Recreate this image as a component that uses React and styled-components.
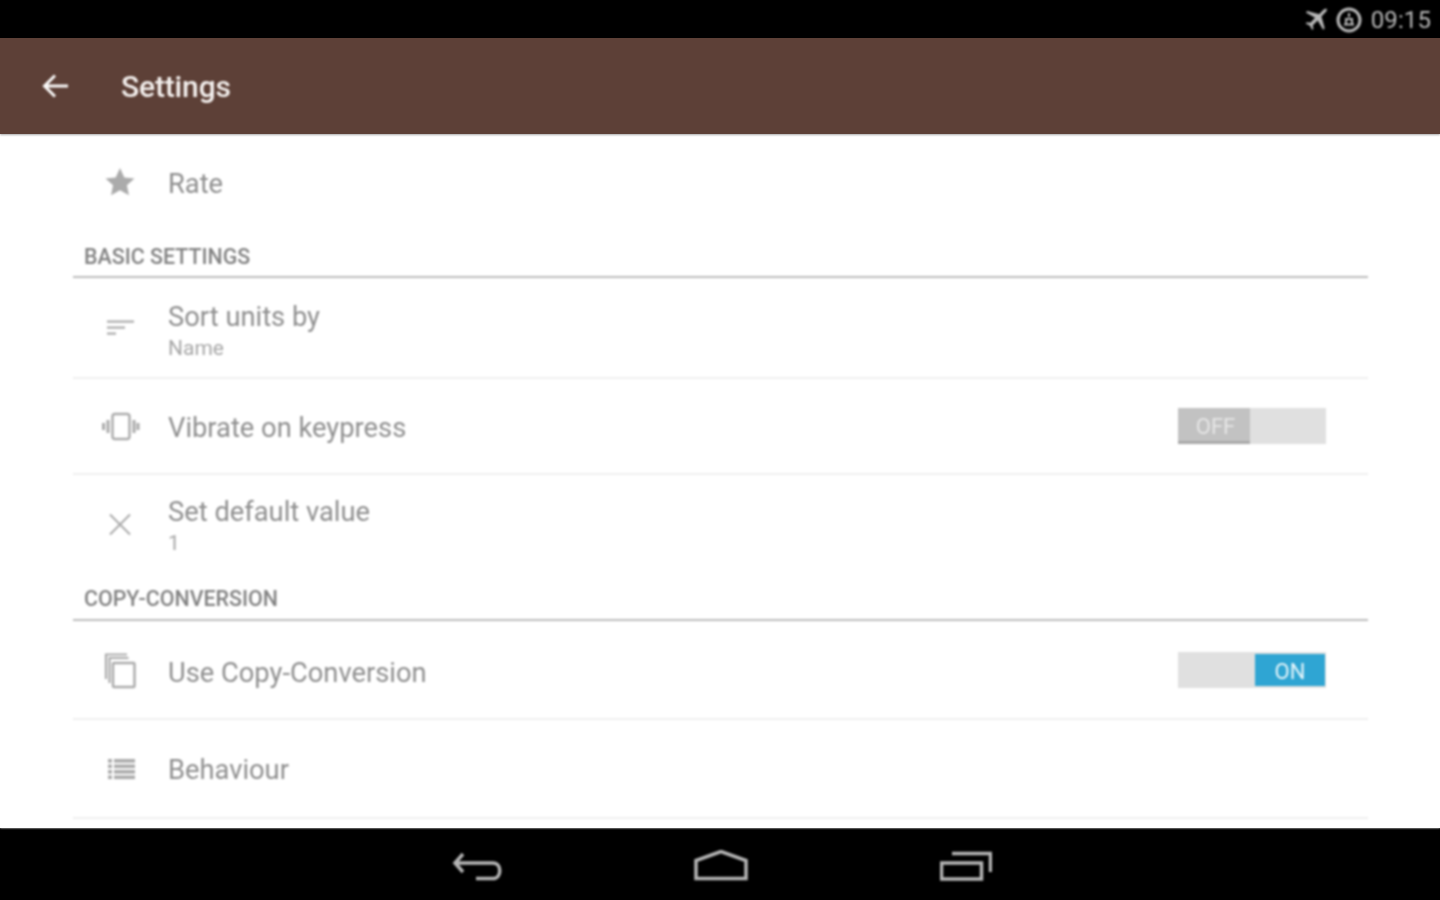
import React from "react";
import styled, { createGlobalStyle, css } from "styled-components";

const GlobalStyle = createGlobalStyle`
  html, body {
    margin: 0;
    padding: 0;
    background: #fff;
  }
  body {
    font-family: Roboto, "Liberation Sans", sans-serif;
  }
`;

// the reference is an upscaled capture, everything drawn on the bars is a bit soft
const soft = css`
  filter: blur(0.8px);
`;

const Screen = styled.div`
  width: 1440px;
  height: 900px;
  display: flex;
  flex-direction: column;
  overflow: hidden;
  background: #fff;
`;

const StatusBar = styled.div`
  height: 38px;
  flex: none;
  background: #000;
  display: flex;
  align-items: center;
  justify-content: flex-end;
  padding: 1px 9px 0 0;
  box-sizing: border-box;
  color: #b8b8b8;
`;

const StatusTime = styled.span`
  ${soft}
  font-size: 24px;
  margin-left: 8px;
  letter-spacing: 0.1px;
`;

const AirplaneIcon = styled.svg`
  ${soft}
  width: 26px;
  height: 26px;
  margin-right: 6px;
`;

const AlarmIcon = styled.svg`
  ${soft}
  width: 28px;
  height: 28px;
`;

const Toolbar = styled.div`
  height: 96px;
  flex: none;
  background: #5d4037;
  display: flex;
  align-items: center;
  box-shadow: 0 1px 2px rgba(0, 0, 0, 0.35);
  position: relative;
  z-index: 1;
`;

const BackButton = styled.div`
  ${soft}
  width: 121px;
  height: 30px;
  padding-left: 41px;
  box-sizing: border-box;
  display: flex;
  align-items: center;
  color: #fbfaf9;
`;

const Title = styled.div`
  ${soft}
  color: #f5f1ef;
  font-size: 30px;
  font-weight: 500;
  letter-spacing: -0.15px;
`;

const Content = styled.div`
  ${soft}
  flex: 1;
  padding: 0 72px 0 73px;
  background: #fff;
  overflow: hidden;
`;

const Row = styled.div`
  height: ${(p) => p.$h}px;
  display: flex;
  align-items: center;
  box-sizing: border-box;
  border-bottom: ${(p) => (p.$line ? "2px solid #efefef" : "none")};
`;

const IconBox = styled.div`
  width: 95px;
  flex: none;
  box-sizing: border-box;
  padding-right: 1px;
  display: flex;
  justify-content: center;
  color: #ababab;
`;

const RowText = styled.div`
  flex: 1;
  display: flex;
  flex-direction: column;
  padding-top: ${(p) => p.$pt || 0}px;
`;

const RowTitle = styled.div`
  font-size: 27.3px;
  line-height: 36px;
  color: #8f8f8f;
`;

const RowSub = styled.div`
  font-size: 21px;
  line-height: 26px;
  color: #a6a6a6;
`;

const SectionHeader = styled.div`
  height: ${(p) => p.$h}px;
  box-sizing: border-box;
  border-bottom: 2px solid #bdbdbd;
  display: flex;
  align-items: flex-end;
  padding: 0 0 ${(p) => p.$pb}px 11px;
  font-size: 21.4px;
  font-weight: 500;
  line-height: 26px;
  color: #828282;
`;

const Toggle = styled.div`
  width: 148px;
  height: 36px;
  margin-right: 42px;
  background: #e0e0e0;
  display: flex;
  justify-content: ${(p) => (p.$on ? "flex-end" : "flex-start")};
  align-items: stretch;
`;

const Thumb = styled.div`
  width: ${(p) => (p.$on ? 70 : 72)}px;
  margin: ${(p) => (p.$on ? "2px 1px" : "0")};
  padding-top: ${(p) => (p.$on ? 3 : 4)}px;
  padding-left: ${(p) => (p.$on ? 0 : 3)}px;
  box-sizing: border-box;
  background: ${(p) => (p.$on ? "#2fa5d3" : "#c2c2c2")};
  border-bottom: ${(p) => (p.$on ? "none" : "3px solid #a9a9a9")};
  color: ${(p) => (p.$on ? "#e8f6fb" : "#e6e6e6")};
  font-size: 22px;
  display: flex;
  align-items: center;
  justify-content: center;
`;

const NavBar = styled.div`
  height: 72px;
  flex: none;
  background: #000;
  display: flex;
  justify-content: center;
  align-items: center;
  gap: 190px;
  padding: 4px 0 0 4px;
  box-sizing: border-box;
  color: #b5b5b5;
`;

const NavIcon = styled.svg`
  ${soft}
  width: ${(p) => p.$w}px;
  height: 32px;
`;

const GlyphIcon = styled.svg`
  width: 40px;
  height: 40px;
  display: block;
`;

const star = (
  <GlyphIcon viewBox="0 0 40 40" fill="currentColor">
    <path d="M20 5l4.300 9.400 10.200 1.100-7.600 6.800 2.100 10-9-5.100-9 5.100 2.100-10-7.600-6.800 10.200-1.100z" />
  </GlyphIcon>
);

const sort = (
  <GlyphIcon viewBox="0 0 40 40" fill="currentColor">
    <rect x="7" y="12.500" width="27" height="2.200" />
    <rect x="7" y="18.500" width="18" height="2.200" />
    <rect x="7" y="24.500" width="9" height="2.200" />
  </GlyphIcon>
);

const vibrate = (
  <GlyphIcon viewBox="0 0 40 40" fill="none" stroke="currentColor">
    <rect x="12.500" y="8" width="17" height="25" rx="2.500" strokeWidth="2.400" />
    <path d="M8 14v13M3.500 17v7M34 14v13M38 17v7" strokeWidth="3" />
  </GlyphIcon>
);

const cross = (
  <GlyphIcon viewBox="0 0 40 40" fill="none" stroke="currentColor">
    <path d="M10 10.500l20 20M30 10.500l-20 20" strokeWidth="2" />
  </GlyphIcon>
);

const copy = (
  <GlyphIcon viewBox="0 0 40 40" fill="none" stroke="currentColor">
    <path d="M6 29V4.500h21" strokeWidth="2.200" />
    <path d="M9.500 33V8h19" strokeWidth="2.200" />
    <rect x="13" y="13" width="21.500" height="24" rx="1" strokeWidth="2.400" fill="#fff" />
  </GlyphIcon>
);

const list = (
  <GlyphIcon viewBox="0 0 40 40" fill="currentColor">
    <rect x="8" y="10" width="4" height="3.600" />
    <rect x="14" y="10" width="21" height="3.600" />
    <rect x="8" y="15.500" width="4" height="3.600" />
    <rect x="14" y="15.500" width="21" height="3.600" />
    <rect x="8" y="21" width="4" height="3.600" />
    <rect x="14" y="21" width="21" height="3.600" />
    <rect x="8" y="26.500" width="4" height="3.600" />
    <rect x="14" y="26.500" width="21" height="3.600" />
  </GlyphIcon>
);

export default function App() {
  return (
    <Screen>
      <GlobalStyle />
      <StatusBar>
        <AirplaneIcon viewBox="0 0 24 24" fill="currentColor">
          <path d="M22.500 2.200c-1-.9-2.600-.6-3.600.4l-4 4L4 3.600 2.600 5l8.600 5-4.400 4.500-3.200-.5L2.400 15.200l4 2 2 4 1.200-1.200-.5-3.200 4.500-4.400 5 8.600 1.400-1.400-3-10.900 4-4c1-1 1.400-2.200.5-3.500z" />
        </AirplaneIcon>
        <AlarmIcon viewBox="0 0 28 28" fill="none" stroke="currentColor">
          <circle cx="14" cy="14" r="11" strokeWidth="3" />
          <path d="M14 7v4M9 18.500h10M11 18v-5h6v5" strokeWidth="2" />
        </AlarmIcon>
        <StatusTime>09:15</StatusTime>
      </StatusBar>
      <Toolbar>
        <BackButton>
          <svg width="28" height="28" viewBox="0 0 28 28" fill="none" stroke="currentColor" strokeWidth="3">
            <path d="M27 14H4M14 3.500L3.500 14 14 24.500" />
          </svg>
        </BackButton>
        <Title>Settings</Title>
      </Toolbar>
      <Content>
        <Row $h={98}>
          <IconBox>{star}</IconBox>
          <RowText $pt={2}>
            <RowTitle>Rate</RowTitle>
          </RowText>
        </Row>
        <SectionHeader $h={46} $pb={6}>BASIC SETTINGS</SectionHeader>
        <Row $h={101} $line>
          <IconBox>{sort}</IconBox>
          <RowText $pt={4}>
            <RowTitle>Sort units by</RowTitle>
            <RowSub>Name</RowSub>
          </RowText>
        </Row>
        <Row $h={96} $line>
          <IconBox>{vibrate}</IconBox>
          <RowText $pt={4}>
            <RowTitle>Vibrate on keypress</RowTitle>
          </RowText>
          <Toggle>
            <Thumb>OFF</Thumb>
          </Toggle>
        </Row>
        <Row $h={98}>
          <IconBox>{cross}</IconBox>
          <RowText $pt={2}>
            <RowTitle>Set default value</RowTitle>
            <RowSub>1</RowSub>
          </RowText>
        </Row>
        <SectionHeader $h={48} $pb={7}>COPY-CONVERSION</SectionHeader>
        <Row $h={99} $line>
          <IconBox>{copy}</IconBox>
          <RowText $pt={6}>
            <RowTitle>Use Copy-Conversion</RowTitle>
          </RowText>
          <Toggle $on>
            <Thumb $on>ON</Thumb>
          </Toggle>
        </Row>
        <Row $h={99} $line>
          <IconBox>{list}</IconBox>
          <RowText $pt={2}>
            <RowTitle>Behaviour</RowTitle>
          </RowText>
        </Row>
      </Content>
      <NavBar>
        <NavIcon $w={52} viewBox="0 0 52 32" fill="none" stroke="currentColor" strokeWidth="3.500">
          <path d="M11 4L3 13l8 9M3 13H41c9 0 9 15.500 0 15.500H24" />
        </NavIcon>
        <NavIcon $w={56} viewBox="0 0 56 32" fill="none" stroke="currentColor" strokeWidth="3.500">
          <path d="M27 1.500L2 10.500V28.500h50V10.500z" />
        </NavIcon>
        <NavIcon $w={52} viewBox="0 0 52 32" fill="none" stroke="currentColor" strokeWidth="3.500">
          <path d="M12 3.500h38.500v18.500" />
          <rect x="1.500" y="13" width="40" height="16" />
        </NavIcon>
      </NavBar>
    </Screen>
  );
}
